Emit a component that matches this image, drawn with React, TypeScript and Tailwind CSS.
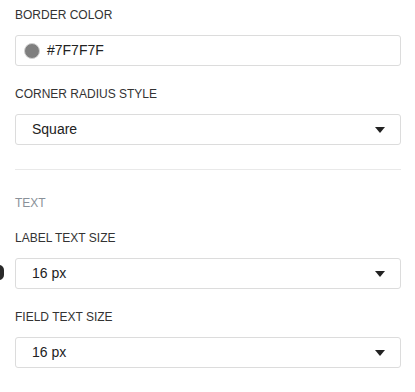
import React from "react";

function Caret() {
  return (
    <svg width="10" height="6" viewBox="0 0 10 6" className="shrink-0">
      <path d="M0 0 L10 0 L5 6 Z" fill="#222" />
    </svg>
  );
}

function Label({ children, className = "" }: { children: React.ReactNode; className?: string }) {
  return <div className={`h-4 text-[12px] leading-4 uppercase ${className}`}>{children}</div>;
}

function Select({ value }: { value: string }) {
  return (
    <div className="mt-3 flex h-[31px] items-center justify-between rounded-[3px] border border-[#dcdcdc] bg-white pl-4 pr-[15px] text-[14px] text-[#222]">
      <span>{value}</span>
      <Caret />
    </div>
  );
}

export default function App() {
  return (
    <div
      className="relative h-[392px] w-[415px] overflow-hidden bg-white pl-[15px] pr-[14px] pt-[7px]"
      style={{ fontFamily: '"Liberation Sans", Arial, sans-serif' }}
    >
      <div className="absolute left-[-6px] top-[265px] h-[15px] w-[10px] rounded-full bg-[#2a2a2a]" />
      <Label className="text-[#333]">Border Color</Label>
      <div className="mt-3 flex h-[31px] items-center rounded-[3px] border border-[#dcdcdc] bg-white pl-[8px] text-[14px] text-[#222]">
        <span className="h-[16px] w-[16px] rounded-full border border-[#d0d0d0] bg-[#7f7f7f]" />
        <span className="ml-[7px]">#7F7F7F</span>
      </div>

      <Label className="mt-[20px] text-[#333]">Corner Radius Style</Label>
      <Select value="Square" />

      <div className="mt-[24px] h-px bg-[#e9e9e9]" />

      <Label className="mt-[25px] text-[#8a9199]">Text</Label>

      <Label className="mt-[19px] text-[#333]">Label Text Size</Label>
      <Select value="16 px" />

      <Label className="mt-[20px] text-[#333]">Field Text Size</Label>
      <Select value="16 px" />
    </div>
  );
}
